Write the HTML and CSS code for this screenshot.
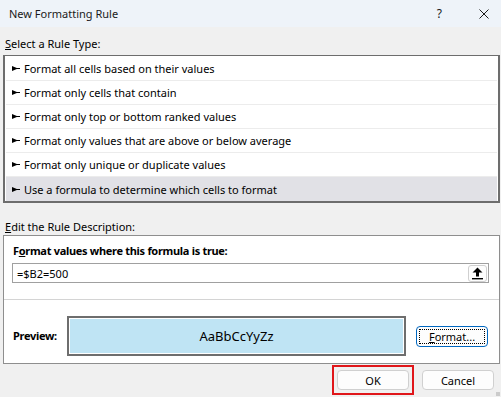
FILE: index.html
```html
<!DOCTYPE html>
<html>
<head>
<meta charset="utf-8">
<link rel="stylesheet" href="styles.css">
</head>
<body>
<div class="dialog">
  <div class="titlebar">
    <span class="title">New Formatting Rule</span>
    <span class="help">?</span>
    <svg class="close" width="10" height="10" viewBox="0 0 10 10"><path d="M0.5 0.5 L9.5 9.5 M9.5 0.5 L0.5 9.5" stroke="#1a1a1a" stroke-width="1" fill="none"/></svg>
  </div>
  <div class="label sel-label"><u>S</u>elect a Rule Type:</div>
  <div class="listbox">
    <div class="row"><svg class="arr" width="8" height="5" viewBox="0 0 8 5"><path d="M0 0 L0 5 L6 2.5 Z" fill="#000"/><rect x="0" y="2" width="8" height="1" fill="#000"/></svg>Format all cells based on their values</div>
    <div class="row"><svg class="arr" width="8" height="5" viewBox="0 0 8 5"><path d="M0 0 L0 5 L6 2.5 Z" fill="#000"/><rect x="0" y="2" width="8" height="1" fill="#000"/></svg>Format only cells that contain</div>
    <div class="row"><svg class="arr" width="8" height="5" viewBox="0 0 8 5"><path d="M0 0 L0 5 L6 2.5 Z" fill="#000"/><rect x="0" y="2" width="8" height="1" fill="#000"/></svg>Format only top or bottom ranked values</div>
    <div class="row"><svg class="arr" width="8" height="5" viewBox="0 0 8 5"><path d="M0 0 L0 5 L6 2.5 Z" fill="#000"/><rect x="0" y="2" width="8" height="1" fill="#000"/></svg>Format only values that are above or below average</div>
    <div class="row"><svg class="arr" width="8" height="5" viewBox="0 0 8 5"><path d="M0 0 L0 5 L6 2.5 Z" fill="#000"/><rect x="0" y="2" width="8" height="1" fill="#000"/></svg>Format only unique or duplicate values</div>
    <div class="row selected"><svg class="arr" width="8" height="5" viewBox="0 0 8 5"><path d="M0 0 L0 5 L6 2.5 Z" fill="#000"/><rect x="0" y="2" width="8" height="1" fill="#000"/></svg>Use a formula to determine which cells to format</div>
  </div>
  <div class="label edit-label"><u>E</u>dit the Rule Description:</div>
  <div class="descbox">
    <div class="bold-label">F<u>o</u>rmat values where this formula is true:</div>
    <div class="formula">
      <span class="ftext">=$B2=500</span>
      <span class="collapse"><svg width="11" height="13" viewBox="0 0 11 13"><path d="M5.5 0.5 L10.5 5.5 L7 5.5 L7 9.5 L4 9.5 L4 5.5 L0.5 5.5 Z" fill="#000"/><rect x="0" y="11" width="11" height="1.4" fill="#000"/></svg></span>
    </div>
    <div class="sep"></div>
    <div class="preview-row">
      <span class="bold-label preview-label">Preview:</span>
      <div class="preview"><div class="preview-inner">AaBbCcYyZz</div></div>
      <div class="btn format-btn"><span class="focus"><u>F</u>ormat...</span></div>
    </div>
  </div>
  <div class="buttons">
    <div class="okwrap"><div class="btn">OK</div></div>
    <div class="btn cancel">Cancel</div>
  </div>
  <div class="grip"></div>
</div>
</body>
</html>
```
FILE: styles.css
```css
* { box-sizing: border-box; }
html, body { margin: 0; padding: 0; }
body {
  width: 501px;
  height: 397px;
  background: #f0f0f0;
  font-family: "Noto Sans", "Open Sans", sans-serif;
  font-size: 11px;
  color: #000;
  overflow: hidden;
}
.dialog {
  position: relative;
  width: 501px;
  height: 397px;
  display: flex;
  flex-direction: column;
}
.titlebar {
  height: 27px;
  background: #eef3f9;
  display: flex;
  align-items: center;
  padding-left: 9px;
  color: #1a1a1a;
}
.title { flex: 1; font-size: 11px; }
.help { font-size: 12px; margin-right: 37px; }
.close { margin-right: 12px; }
.label { line-height: 16px; height: 16px; padding-left: 5px; }
.sel-label { margin-top: 9px; }
.listbox {
  margin: 3px 1px 0 3px;
  background: #fff;
  border: 2px solid #6d6d6d;
  border-top-width: 1px;
  padding: 1px 1px 0 1px;
}
.row {
  height: 24px;
  border-bottom: 1px solid #ececec;
  display: flex;
  align-items: center;
  padding-left: 6px;
  white-space: nowrap;
}
.row.selected { background: #e1e1e6; border-bottom: none; }
.arr { margin-right: 4px; flex: none; }
.edit-label { margin-top: 16px; }
.descbox {
  margin: 0 1px 0 3px;
  height: 129px;
  border: 1px solid #8e8e8e;
  background: #fff;
  padding-top: 7px;
}
.bold-label { font-weight: bold; line-height: 16px; padding-left: 9px; letter-spacing: -0.3px; }
.formula {
  margin: 4px 10px 0 8px;
  height: 20px;
  border: 1px solid #a0a0a0;
  display: flex;
  align-items: center;
  padding-left: 4px;
}
.ftext { flex: 1; }
.collapse {
  width: 19px;
  height: 17px;
  margin-right: 1px;
  border: 1px solid #d0d0d0;
  border-radius: 3px;
  display: flex;
  align-items: center;
  justify-content: center;
  background: #fdfdfd;
}
.sep { height: 1px; background: #d4d4d4; margin-top: 16px; }
.preview-row {
  display: flex;
  align-items: center;
  margin-top: 16px;
}
.preview-label { width: 63px; flex: none; }
.preview {
  width: 339px;
  height: 40px;
  border: 2px solid #6e6e6e;
  padding: 1px;
  flex: none;
}
.preview-inner {
  height: 100%;
  background: #bfe4f4;
  display: flex;
  align-items: center;
  justify-content: center;
  font-size: 13px;
}
.btn {
  width: 72px;
  height: 20px;
  border: 1px solid #d0d0d0;
  border-radius: 4px;
  background: #fdfdfd;
  display: flex;
  align-items: center;
  justify-content: center;
}
.format-btn {
  margin-left: 10px;
  height: 21px;
  border-color: #0067c0;
  padding: 2px;
}
.focus {
  width: 100%;
  height: 100%;
  border: 1px dotted #000;
  display: flex;
  align-items: center;
  justify-content: center;
}
.buttons {
  display: flex;
  justify-content: flex-end;
  align-items: center;
  margin-top: 1px;
  padding-right: 7px;
}
.okwrap {
  border: 2px solid #e0161a;
  padding: 3px;
  margin-right: 8px;
}
.grip {
  position: absolute;
  right: 1px;
  bottom: 1px;
  width: 4px;
  height: 4px;
  background: radial-gradient(circle, #a0a0a0 0.6px, transparent 0.8px) 0 0 / 2px 2px;
}
```
